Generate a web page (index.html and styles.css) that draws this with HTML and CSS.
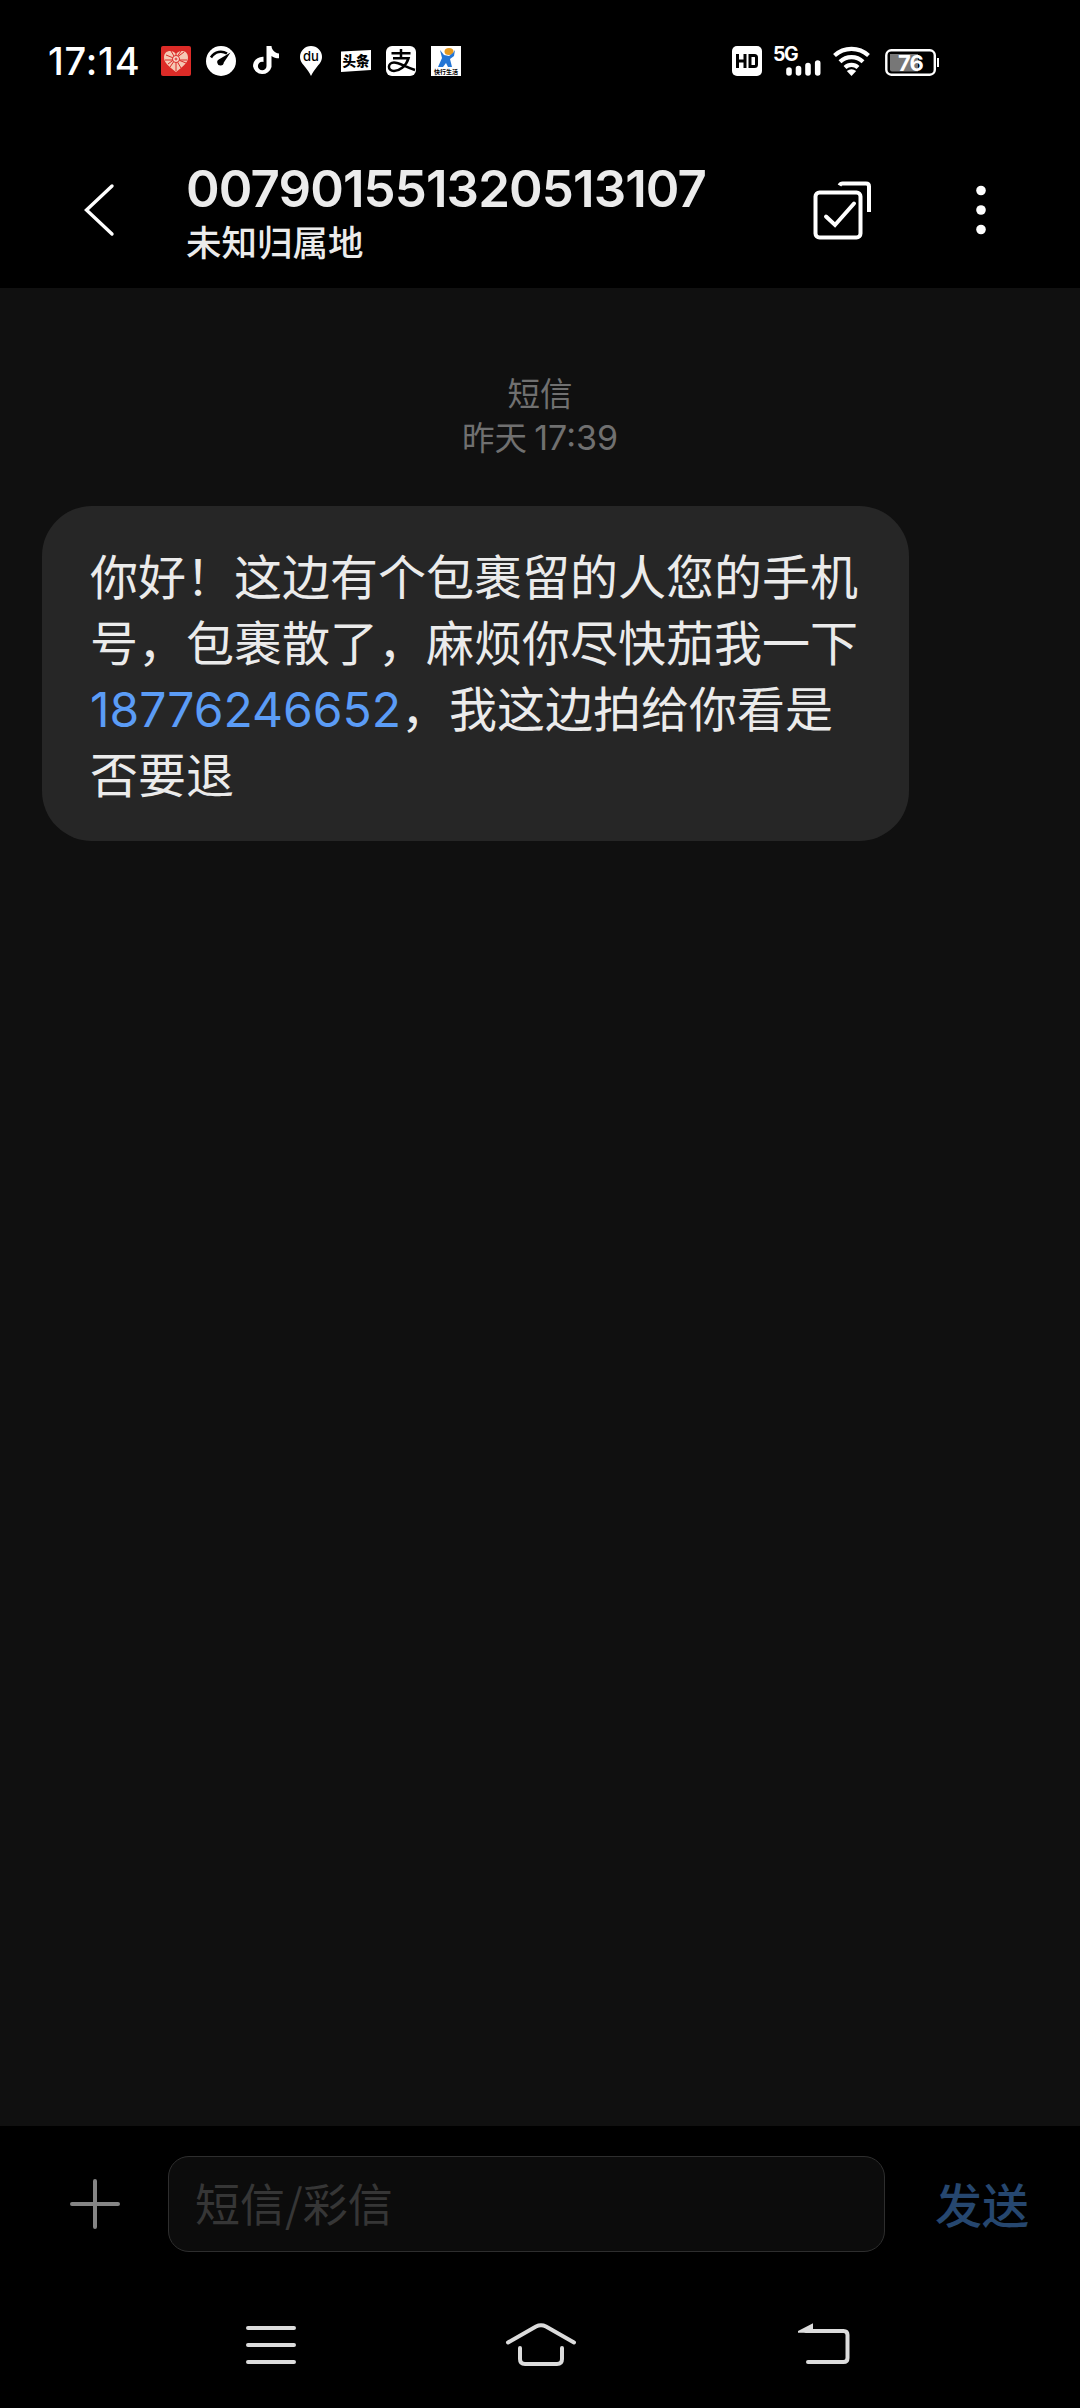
FILE: index.html
```html
<!DOCTYPE html>
<html lang="zh-CN">
<head>
<meta charset="utf-8">
<title>短信</title>
<link rel="stylesheet" href="styles.css">
</head>
<body>
<div class="screen">
  <div class="status">
    <span class="clock">17:14</span>
    <div class="apps">
      <svg width="30" height="30" viewBox="0 0 30 30"><rect width="30" height="30" rx="2" fill="#dc2b27"/><path d="M15 26C9 21 3 17 3 11.500C3 7 6 5 9 5c3 0 5 1.500 6 3.500C16 6.500 18 5 21 5c3 0 6 2 6 6.500C27 17 21 21 15 26z" fill="#f5c9b4"/><path d="M5 9l20 8M7 18L23 6M10 5l10 17M20 5L9 21M4 14h22M15 8v17" stroke="#dc2b27" stroke-width="1"/><circle cx="15" cy="13" r="3.500" fill="#f8dfcf" stroke="#dc2b27"/><path d="M13.500 13h3M15 11.500v3" stroke="#dc2b27"/></svg>
      <svg width="30" height="30" viewBox="0 0 30 30"><circle cx="15" cy="15" r="15" fill="#fff"/><path d="M5 11.500C9 5 16 4.500 21 7.500" fill="none" stroke="#000" stroke-width="2.600"/><path d="M24.500 6.500L17.800 16.500A3.300 3.300 0 1 1 13.200 13.200z" fill="#000"/></svg>
      <svg width="30" height="30" viewBox="0 0 30 30"><path d="M20.500 0h-5v20a4.300 4.300 0 1 1-4.300-4.300l1.300.2v-5.100C6.500 10.500 2 14.800 2 20.300A9.500 9.500 0 0 0 20.500 21V10c2 1.500 4.500 2.300 7.500 2.300V7.400C24 7 20.700 4 20.500 0z" fill="#fff"/></svg>
      <svg width="30" height="30" viewBox="0 0 30 30"><path d="M15 0a11 11 0 0 1 11 11c0 4.500-3 7.200-5.500 10.500C18 24.700 16.500 27 15 30c-1.500-3-3-5.300-5.500-8.500C7 18.200 4 15.500 4 11A11 11 0 0 1 15 0z" fill="#fff"/><text x="15" y="15" class="du">du</text></svg>
      <svg width="30" height="30" viewBox="0 0 30 30"><path d="M0 5.500L30 4v20L0 26z" fill="#fff"/><text x="15" y="20" class="toutiao">头条</text></svg>
      <svg width="30" height="30" viewBox="0 0 30 30"><rect width="30" height="30" rx="6" fill="#fff"/><path d="M5.500 7.200h19M15 3v9.300M7 12.300h15.500C20 20.500 13 25 8 25c-7 0-6.500-8.500 0-8.500 5.500 0 11 4.500 21 7.500" fill="none" stroke="#000" stroke-width="2.500"/></svg>
      <svg width="30" height="30" viewBox="0 0 30 30"><rect width="30" height="30" fill="#fff"/><ellipse cx="18" cy="5.500" rx="4.500" ry="3.500" fill="#e69a20"/><path d="M9 4l4 5 5 1 4-3 2-3-1 6-4 3 2 8h-4l-2-4-3 4H7l4-9z" fill="#2375d5"/><text x="15" y="28" class="tiny">快行生活</text></svg>
    </div>
    <div class="signals">
      <svg width="30" height="30" viewBox="0 0 30 30"><rect width="30" height="30" rx="5" fill="#fff"/><path d="M5.500 8v14M13 8v14M5.500 15H13M18 9.500h4.500q2 0 2 2v7q0 2-2 2H18z" fill="none" stroke="#000" stroke-width="3"/></svg>
      <svg class="cell" width="48" height="30" viewBox="0 0 48 30"><text x="-1" y="15" class="net">5G</text><path d="M15 24v3M24.500 22.500V27M34 19.500V27M43.700 17V27" stroke="#fff" stroke-width="5.600" stroke-linecap="round"/></svg>
      <svg class="wifi" width="37" height="30" viewBox="0 0 37 30"><g fill="none" stroke="#fff" stroke-width="4.200"><path d="M1.500 9.500a25 25 0 0 1 34 0"/><path d="M7 15.800a16.700 16.700 0 0 1 23 0"/><path d="M12 21.500a9.500 9.500 0 0 1 13 0"/></g><path d="M13.800 25q4.700-3.600 9.400 0l-4.700 5z" fill="#fff"/></svg>
      <svg class="battery" width="54" height="30" viewBox="0 0 54 30"><rect x="1.300" y="4.300" width="48.500" height="24.400" rx="5" fill="none" stroke="#fff" stroke-width="2.400"/><path d="M5 8h28v17.500H7q-2 0-2-2z" fill="#777"/><rect x="52" y="12" width="2" height="9" fill="#fff"/><text x="25.500" y="24.500" class="pct">76</text></svg>
    </div>
  </div>

  <header class="header">
    <svg class="back" width="32" height="56" viewBox="0 0 32 56"><path d="M29 4L3.500 28 29 52" fill="none" stroke="#fff" stroke-width="3.400" stroke-linecap="round"/></svg>
    <div class="contact">
      <div class="number">007901551320513107</div>
      <div class="place">未知归属地</div>
    </div>
    <svg class="select" width="60" height="60" viewBox="0 0 60 60" fill="none" stroke="#fff" stroke-width="4" stroke-linejoin="round"><rect x="3.500" y="12.500" width="45" height="45" rx="4"/><path d="M14 36.500l9 8.500 19-21.500" stroke-linecap="round" stroke-linejoin="miter"/><path d="M27.500 5.500q1-2 3-2H54q3 0 3 3V32"/></svg>
    <svg class="more" width="12" height="52" viewBox="0 0 12 52" fill="#fff"><circle cx="6" cy="6.500" r="4.800"/><circle cx="6" cy="26" r="4.800"/><circle cx="6" cy="45.500" r="4.800"/></svg>
  </header>

  <main class="thread">
    <div class="stamp"><div>短信</div><div>昨天 <span class="hour">17:39</span></div></div>
    <div class="bubble">你好！这边有个包裹留的人您的手机<br>号，包裹散了，麻烦你尽快茄我一下<br><span class="phone">18776246652</span>，我这边拍给你看是<br>否要退</div>
  </main>

  <footer class="composer">
    <svg class="plus" width="52" height="52" viewBox="0 0 52 52"><path d="M26 3v46M3 26h46" stroke="#858585" stroke-width="4" stroke-linecap="round"/></svg>
    <div class="field">短信/彩信</div>
    <div class="send">发送</div>
  </footer>

  <nav class="nav">
    <svg width="50" height="44" viewBox="0 0 50 44"><path d="M2 5h46M2 22h46M2 39h46" stroke="#dcdcdc" stroke-width="4" stroke-linecap="round"/></svg>
    <svg class="home" width="72" height="44" viewBox="0 0 72 44" fill="none" stroke="#dcdcdc" stroke-width="4" stroke-linecap="round"><path d="M3 19.500L31 3.500q5-2.500 10 0l28 16M15 25v11q0 5 5 5h32q5 0 5-5V25"/></svg>
    <svg class="return" width="52" height="44" viewBox="0 0 52 44"><path d="M8 8h37.500q4 0 4 4v23q0 4-4 4H10" fill="none" stroke="#dcdcdc" stroke-width="4" stroke-linecap="round"/><path d="M0 9.800V8L15 .3v9.500z" fill="#dcdcdc"/></svg>
  </nav>
</div>
</body>
</html>
```
FILE: styles.css
```css
body {
  margin: 0;
  background: #000;
}

.screen {
  width: 1080px;
  height: 2408px;
  display: flex;
  flex-direction: column;
  overflow: hidden;
  background: #000;
  color: #ebebeb;
  font-family: "Noto Sans CJK SC", sans-serif;
}

svg {
  display: block;
  flex: none;
}

.status {
  height: 122px;
  box-sizing: border-box;
  padding: 0 141px 0 48px;
  display: flex;
  align-items: center;
}

.clock {
  width: 113px;
  font: 500 38px/40px Inter, sans-serif;
  letter-spacing: 0.8px;
  color: #fff;
}

.apps {
  display: flex;
  gap: 15px;
}

.signals {
  display: flex;
  margin-left: auto;
}

.signals .cell {
  margin-left: 12px;
  overflow: visible;
}

.signals .wifi {
  margin-left: 11px;
}

.signals .battery {
  margin-left: 15px;
}

.du,
.toutiao,
.tiny,
.pct {
  text-anchor: middle;
}

.du {
  font: 500 13px Inter, sans-serif;
}

.toutiao {
  font: 900 13.500px "Noto Sans CJK SC", sans-serif;
}

.tiny {
  font: 700 6px "Noto Sans CJK SC", sans-serif;
}

.net {
  font: 700 19.500px Inter, sans-serif;
  letter-spacing: -1.5px;
  fill: #fff;
}

.pct {
  font: 700 22px Inter, sans-serif;
  letter-spacing: -0.8px;
  fill: #fff;
}

.header {
  height: 166px;
  display: flex;
  padding-left: 83px;
}

.back {
  margin-top: 60px;
}

.contact {
  width: 622px;
  margin-left: 71px;
  margin-top: 37px;
}

.number {
  font: 600 51px/60px Inter, sans-serif;
  letter-spacing: -0.9px;
}

.place {
  margin-top: 2px;
  font-size: 35.500px;
  font-weight: 500;
  line-height: 40px;
}

.select {
  margin-top: 58px;
  margin-left: 4px;
}

.more {
  margin-top: 62px;
  margin-left: 103px;
}

.thread {
  height: 1838px;
  background: #101010;
}

.stamp {
  padding-top: 82px;
  text-align: center;
  font-size: 32.500px;
  line-height: 44px;
  color: #707070;
}

.stamp div {
  height: 44px;
}

.hour {
  font-family: Inter, sans-serif;
  font-size: 34px;
}

.bubble {
  width: 867px;
  height: 335px;
  box-sizing: border-box;
  margin: 48px 0 0 42px;
  padding: 35px 0 0 48px;
  border-radius: 50px;
  background: #262626;
  font-size: 48px;
  line-height: 66px;
  white-space: nowrap;
}

.phone {
  font-family: Inter, sans-serif;
  line-height: 1;
  color: #5b9cf6;
}

.composer {
  height: 156px;
  display: flex;
  align-items: center;
}

.plus {
  margin-left: 69px;
}

.field {
  width: 717px;
  height: 96px;
  box-sizing: border-box;
  margin-left: 47px;
  padding-left: 26px;
  border: 1px solid #2e2e2e;
  border-radius: 21px;
  background: #0c0c0c;
  font-size: 45px;
  line-height: 92px;
  color: #363636;
}

.send {
  margin-left: 50px;
  font-size: 47px;
  font-weight: 500;
  line-height: 96px;
  padding-bottom: 3px;
  color: #26476f;
}

.nav {
  flex: 1;
  display: flex;
  align-items: flex-start;
  padding: 41px 0 0 246px;
}

.home {
  margin-left: 209px;
}

.return {
  margin-left: 221px;
}
```
